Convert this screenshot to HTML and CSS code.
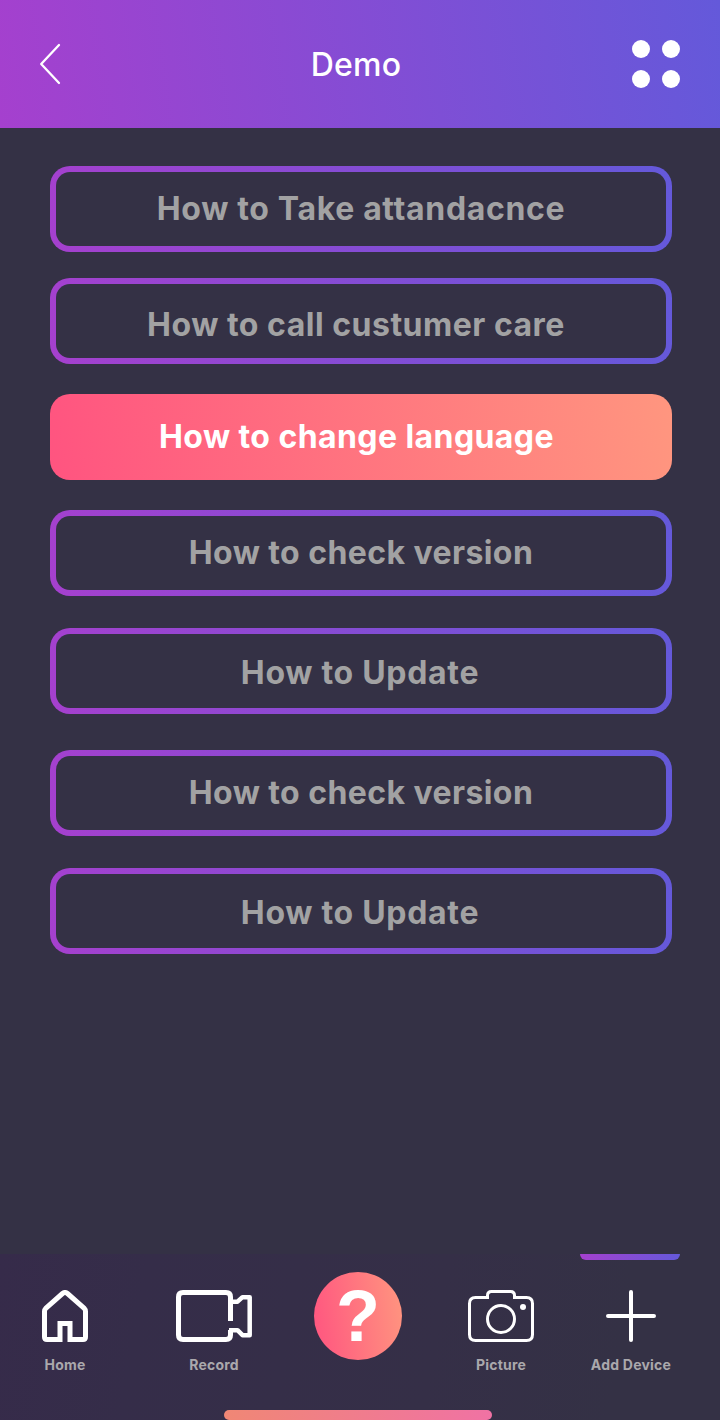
FILE: index.html
```html
<!DOCTYPE html>
<html lang="en">
<head>
<meta charset="utf-8">
<title>Demo</title>
<link rel="stylesheet" href="styles.css">
</head>
<body>
<div class="screen">
  <header class="header">
    <svg class="back" width="22" height="42" viewBox="0 0 22 42"><path d="M20 2 2.200 21 20 40" fill="none" stroke="#fff" stroke-width="2.3" stroke-linecap="round" stroke-linejoin="round"/></svg>
    <h1 class="title">Demo</h1>
    <svg class="menu" width="48" height="48" viewBox="0 0 48 48" fill="#fff"><circle cx="9" cy="9" r="9"/><circle cx="39" cy="9" r="9"/><circle cx="9" cy="39" r="9"/><circle cx="39" cy="39" r="9"/></svg>
  </header>
  <main class="topics">
    <button class="topic topic-attendance">How to Take attandacnce</button>
    <button class="topic topic-care">How to call custumer care</button>
    <button class="topic topic-active">How to change language</button>
    <button class="topic topic-version">How to check version</button>
    <button class="topic topic-update">How to Update</button>
    <button class="topic topic-version-alt">How to check version</button>
    <button class="topic topic-update">How to Update</button>
  </main>
  <nav class="nav">
    <div class="nav-marker"></div>
    <div class="nav-items">
      <a class="nav-item nav-home">
        <svg width="46" height="52" viewBox="0 0 46 52" fill="none" stroke="#fff" stroke-width="5" stroke-linejoin="miter"><path d="M18 52V33.5H28V52M18 49.5H5Q2.5 49.500 2.500 47V21.500Q2.500 19.500 4 18L20.500 3.500Q23 1.500 25.500 3.500L42 18Q43.500 19.500 43.500 21.500V47Q43.500 49.500 41 49.500H28"/></svg>
        <span>Home</span>
      </a>
      <a class="nav-item nav-record">
        <svg width="76" height="52" viewBox="0 0 76 52" fill="none" stroke="#fff"><path stroke-width="5" d="M54.500 31V7Q54.500 2.500 50 2.500H7Q2.500 2.500 2.500 7V45Q2.500 49.500 7 49.500H50Q54.500 49.500 54.500 45V40"/><path stroke-width="4.500" stroke-linejoin="round" d="M56 11.700H61.500L66.500 7.200H73.700V45.200H66.500L61.500 40.200H53"/></svg>
        <span>Record</span>
      </a>
      <a class="nav-help">?</a>
      <a class="nav-item nav-picture">
        <svg width="66" height="52" viewBox="0 0 66 52" fill="none" stroke="#fff" stroke-width="3"><path d="M19.500 9V5.500Q19.500 1.500 23.500 1.500H42.500Q46.500 1.500 46.500 5.500V7.500H58.500Q64.500 7.500 64.500 13.500V44.500Q64.500 50.500 58.500 50.500H7.500Q1.500 50.500 1.500 44.500V13.500Q1.500 7.500 7.500 7.500H19.500"/><circle cx="33" cy="29" r="13.500"/><circle cx="55" cy="17" r="3" fill="#fff" stroke="none"/></svg>
        <span>Picture</span>
      </a>
      <a class="nav-item nav-add">
        <svg width="50" height="52" viewBox="0 0 50 52" stroke="#fff" stroke-width="4" stroke-linecap="round"><path d="M25 2V50M2 26H48"/></svg>
        <span>Add Device</span>
      </a>
    </div>
    <div class="home-indicator"></div>
  </nav>
</div>
</body>
</html>
```
FILE: styles.css
```css
* { box-sizing: border-box; }
body {
  margin: 0;
  background: #343145;
  font-family: Inter, sans-serif;
}
.screen {
  display: flex;
  flex-direction: column;
  width: 720px;
  height: 1420px;
  overflow: hidden;
}
.header {
  display: grid;
  grid-template-columns: 48px 1fr 48px;
  align-items: center;
  height: 128px;
  padding: 0 40px 0 39px;
  background: linear-gradient(82deg, #a540ce, #6459da);
}
.title {
  margin: 0;
  padding: 2px 7px 0 0;
  color: #fff;
  font-size: 32px;
  font-weight: 500;
  line-height: 40px;
  letter-spacing: 0.2px;
  text-align: center;
}
.topics {
  flex: 1;
  display: flex;
  flex-direction: column;
  align-items: flex-start;
  padding: 38px 48px 0 50px;
}
.topic {
  flex: none;
  width: 622px;
  height: 86px;
  padding: 0;
  border: 6px solid transparent;
  border-radius: 20px;
  background: linear-gradient(#343145, #343145) padding-box,
    linear-gradient(82deg, #a540ce, #6459da) border-box;
  color: #a2a2a3;
  font: 700 32px/40px Inter, sans-serif;
  letter-spacing: 0.42px;
}
.topic-attendance { letter-spacing: 0.65px; }
.topic-care { margin-top: 26px; padding: 8px 10px 0 0; letter-spacing: 0.5px; }
.topic-active {
  margin-top: 30px;
  padding-right: 9px;
  border: 0;
  background: linear-gradient(82deg, #ff5480, #ff967f);
  color: #fff;
}
.topic-version { margin-top: 30px; }
.topic-update { margin-top: 32px; padding: 4px 2px 0 0; letter-spacing: 0.7px; }
.topic-version-alt { margin-top: 36px; }
.nav {
  display: flex;
  flex-direction: column;
  height: 166px;
  background: linear-gradient(100deg, #362b4a 0%, #352d49 20%, #352f47 60%, #343145 85%);
}
.nav-marker {
  width: 100px;
  height: 6px;
  margin-left: 580px;
  border-radius: 0 0 8px 8px;
  background: linear-gradient(82deg, #a540ce, #6459da);
}
.nav-items {
  display: flex;
  flex: 1;
  align-items: flex-start;
  padding-top: 12px;
}
.nav-item {
  display: flex;
  flex-direction: column;
  align-items: center;
  padding-top: 18px;
  color: #aaa8ac;
  font-size: 14px;
  font-weight: 700;
  line-height: 18px;
  letter-spacing: 0.22px;
  white-space: nowrap;
}
.nav-item svg { display: block; margin-bottom: 14px; }
.nav-home { width: 130px; }
.nav-record { width: 168px; }
.nav-help {
  width: 88px;
  height: 88px;
  margin-left: 16px;
  border-radius: 50%;
  background: linear-gradient(82deg, #ff5480, #ff967f);
  color: #fff;
  font: bold 72px/88px "Liberation Sans", sans-serif;
  text-align: center;
}
.nav-picture { width: 130px; margin-left: 34px; }
.nav-add { width: 130px; }
.home-indicator {
  width: 268px;
  height: 10px;
  margin-left: 224px;
  border-radius: 5px;
  background: linear-gradient(90deg, #f08775, #f072a4);
}
```
